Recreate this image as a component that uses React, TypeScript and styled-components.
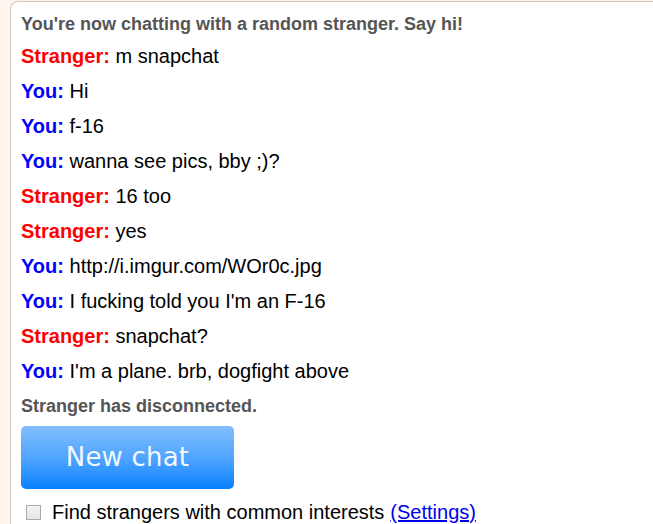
import React from "react";
import styled, { createGlobalStyle } from "styled-components";

const Global = createGlobalStyle`
  html, body {
    margin: 0;
    padding: 0;
    background: #fdf4ec;
    overflow: hidden;
  }
`;

const Page = styled.div`
  padding: 1px 0 0 10px;
  height: 524px;
  box-sizing: border-box;
  font-family: "Liberation Sans", Arial, sans-serif;
`;

const LogBox = styled.div`
  box-sizing: border-box;
  background: #ffffff;
  border: 1px solid #cfc8c2;
  border-bottom: none;
  border-right: none;
  border-top-left-radius: 8px;
  height: 523px;
  padding: 11px 0 0 10px;
  display: flex;
  flex-direction: column;
`;

const Status = styled.div<{ $gap?: number }>`
  color: #555555;
  font-weight: bold;
  font-size: 18px;
  line-height: 22px;
  margin-top: ${(p) => p.$gap ?? 0}px;
`;

const Messages = styled.div`
  display: flex;
  flex-direction: column;
  gap: 12px;
  margin-top: 10px;
`;

const Message = styled.div`
  font-size: 20px;
  line-height: 23px;
  color: #000;
  white-space: nowrap;
`;

const Who = styled.strong<{ $you: boolean }>`
  color: ${(p) => (p.$you ? "#0000ff" : "#ff0000")};
  font-weight: bold;
`;

const NewChatButton = styled.button`
  margin-top: 9px;
  width: 213px;
  height: 63px;
  border: none;
  border-radius: 5px;
  background: linear-gradient(to bottom, #82bffe 0%, #4aa2ff 55%, #0a80ff 100%);
  color: rgba(255, 255, 255, 0.95);
  font-family: "DejaVu Sans", Verdana, sans-serif;
  font-size: 26px;
  letter-spacing: 0.2px;
  padding: 0 0 2px 0;
  cursor: pointer;
`;

const Footer = styled.label`
  display: flex;
  align-items: center;
  margin-top: 12px;
  font-size: 20px;
  line-height: 23px;
  color: #000;
  white-space: nowrap;
`;

const Check = styled.input`
  appearance: none;
  width: 15px;
  height: 15px;
  margin: 0 11px 0 5px;
  border: 1px solid #a9a9a9;
  background: linear-gradient(to bottom, #f2f2f2, #e6e6e6);
  box-sizing: border-box;
`;

const SettingsLink = styled.a`
  color: #0000ee;
  text-decoration: underline;
  margin-left: 6px;
`;

const log: { you: boolean; text: string }[] = [
  { you: false, text: "m snapchat" },
  { you: true, text: "Hi" },
  { you: true, text: "f-16" },
  { you: true, text: "wanna see pics, bby ;)?" },
  { you: false, text: "16 too" },
  { you: false, text: "yes" },
  { you: true, text: "http://i.imgur.com/WOr0c.jpg" },
  { you: true, text: "I fucking told you I'm an F-16" },
  { you: false, text: "snapchat?" },
  { you: true, text: "I'm a plane. brb, dogfight above" },
];

export default function App() {
  return (
    <>
      <Global />
      <Page>
        <LogBox>
          <Status>You're now chatting with a random stranger. Say hi!</Status>
          <Messages>
            {log.map((m, i) => (
              <Message key={i}>
                <Who $you={m.you}>{m.you ? "You:" : "Stranger:"}</Who> {m.text}
              </Message>
            ))}
          </Messages>
          <Status $gap={12}>Stranger has disconnected.</Status>
          <div>
            <NewChatButton>New chat</NewChatButton>
          </div>
          <Footer>
            <Check type="checkbox" />
            Find strangers with common interests
            <SettingsLink href="#">(Settings)</SettingsLink>
          </Footer>
        </LogBox>
      </Page>
    </>
  );
}
